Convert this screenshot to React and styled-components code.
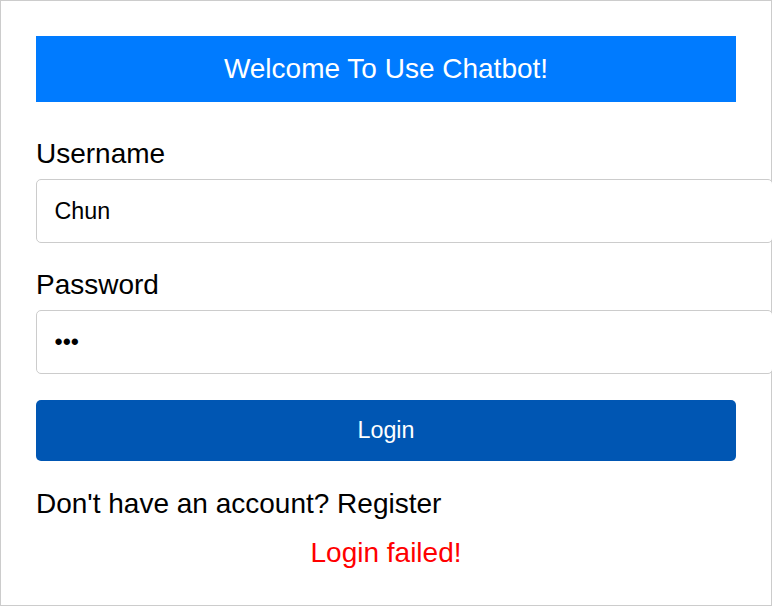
import React from "react"
import styled, { createGlobalStyle } from "styled-components"

const GlobalStyle = createGlobalStyle`
  html, body {
    margin: 0;
    padding: 0;
    overflow: hidden;
    background: #ffffff;
    font-family: "Liberation Sans", Arial, sans-serif;
  }
`

function App() {
  return (
    <>
      <GlobalStyle />
      <LoginBox>
        <Title>Welcome To Use Chatbot!</Title>
        <FormGroup>
          <Label htmlFor="username">Username</Label>
          <Input id="username" type="text" defaultValue="Chun" />
        </FormGroup>
        <FormGroup>
          <Label htmlFor="password">Password</Label>
          <Input id="password" type="password" defaultValue="abc" />
        </FormGroup>
        <LoginButton type="button">Login</LoginButton>
        <RegisterLine>
          Don't have an account? <RegisterLink>Register</RegisterLink>
        </RegisterLine>
        <ErrorText>Login failed!</ErrorText>
      </LoginBox>
    </>
  )
}

const LoginBox = styled.div`
  width: 700px;
  padding: 35px 35px 36px 35px;
  border: 1px solid #cccccc;
  font-family: "Liberation Sans", Arial, sans-serif;
  color: #000000;
`

const Title = styled.h2`
  margin: 0 0 36px 0;
  padding: 17px 0;
  background: #007bff;
  color: #ffffff;
  font-size: 28px;
  line-height: 32px;
  font-weight: normal;
  text-align: center;
`

const FormGroup = styled.div`
  margin-bottom: 26px;
`

const Label = styled.label`
  display: block;
  margin-bottom: 9px;
  font-size: 28px;
  line-height: 32px;
`

const Input = styled.input`
  box-sizing: content-box;
  display: block;
  width: 100%;
  margin: 0;
  padding: 17.5px;
  height: 27px;
  border: 1px solid #cccccc;
  border-radius: 5px;
  font-family: "Liberation Sans", Arial, sans-serif;
  font-size: 23.3px;
  line-height: 27px;
  color: #000000;
  background: #ffffff;
  outline: none;
`

const LoginButton = styled.button`
  display: block;
  width: 100%;
  margin: 1px 0 27px 0;
  padding: 17px 0;
  border: none;
  border-radius: 5px;
  background: #0056b3;
  color: #ffffff;
  font-family: "Liberation Sans", Arial, sans-serif;
  font-size: 23.3px;
  line-height: 27px;
  cursor: pointer;
`

const RegisterLine = styled.p`
  margin: 0 0 17px 0;
  font-size: 28px;
  line-height: 32px;
`

const RegisterLink = styled.span`
  color: #000000;
  cursor: pointer;
`

const ErrorText = styled.p`
  margin: 0;
  font-size: 28px;
  line-height: 32px;
  color: #ff0000;
  text-align: center;
`

export default App
